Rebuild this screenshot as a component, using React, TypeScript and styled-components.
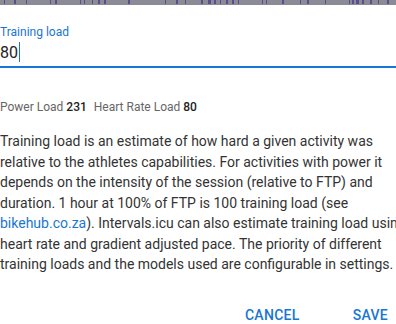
import React from "react";
import styled, { createGlobalStyle } from "styled-components";

const Global = createGlobalStyle`
  html, body { margin: 0; padding: 0; background: #fff; overflow: hidden; }
  body { font-family: Roboto, "Liberation Sans", Arial, sans-serif; }
`;

const Page = styled.div`
  width: 396px;
  height: 324px;
  overflow: hidden;
  display: flex;
  flex-direction: column;
`;

const Backdrop = styled.svg`
  display: block;
  width: 396px;
  height: 5px;
  flex: none;
`;

const Dialog = styled.div`
  width: 412px;
  display: flex;
  flex-direction: column;
`;

const Field = styled.div`
  margin-top: 20px;
  display: flex;
  flex-direction: column;
`;

const Label = styled.label`
  font-size: 12px;
  line-height: 14px;
  color: #1976d2;
`;

const InputRow = styled.div`
  display: flex;
  align-items: center;
  height: 24px;
  margin-top: 1px;
  font-size: 16px;
  color: #222;
  border-bottom: 2px solid #1976d2;
  padding-bottom: 2px;
`;

const Caret = styled.span`
  display: inline-block;
  width: 1px;
  height: 20px;
  background: #1976d2;
  margin-left: 1px;
`;

const Stats = styled.div`
  margin-top: 31px;
  font-size: 12px;
  line-height: 16px;
  color: #666;
  display: flex;
  gap: 7px;
`;

const Stat = styled.span`
  b {
    color: #222;
    font-weight: 500;
  }
`;

const Para = styled.p`
  margin: 16px 0 0;
  font-size: 14px;
  line-height: 20.5px;
  color: #333;
  width: 412px;
`;

const Link = styled.a`
  color: #1976d2;
  text-decoration: none;
`;

const Actions = styled.div`
  width: 396px;
  display: flex;
  justify-content: flex-end;
  gap: 37px;
  margin-top: 32px;
`;

const Button = styled.button`
  border: none;
  background: none;
  padding: 0 8px;
  font-family: inherit;
  font-size: 14px;
  font-weight: 500;
  letter-spacing: 0.3px;
  text-transform: uppercase;
  color: #1976d2;
  line-height: 16px;
`;

const ticks = [
  [4, 1], [14, 2], [26, 1], [50, 1], [55, 2], [80, 1], [84, 1], [92, 1], [98, 2], [104, 2],
  [128, 2], [165, 1], [176, 2], [185, 1], [201, 2], [208, 3], [214, 2], [220, 1], [226, 2],
  [232, 2], [238, 1], [262, 1], [266, 1], [282, 2], [300, 1], [307, 2], [325, 1], [349, 1],
  [352, 2], [356, 3], [362, 2], [370, 2], [378, 1], [387, 2],
];

export default function App() {
  return (
    <Page>
      <Global />
      <Backdrop viewBox="0 0 396 5">
        <rect x="0" y="0" width="396" height="5" fill="#8b8b95" />
        {ticks.map(([x, w], i) => (
          <rect key={i} x={x} y={0} width={w} height={4} fill="#5a4f8e" />
        ))}
      </Backdrop>
      <Dialog>
        <Field>
          <Label>Training load</Label>
          <InputRow>
            80<Caret />
          </InputRow>
        </Field>
        <Stats>
          <Stat>
            Power Load <b>231</b>
          </Stat>
          <Stat>
            Heart Rate Load <b>80</b>
          </Stat>
        </Stats>
        <Para>
          Training load is an estimate of how hard a given activity was relative to the athletes
          capabilities. For activities with power it depends on the intensity of the session
          (relative to FTP) and duration. 1 hour at 100% of FTP is 100 training load (see{" "}
          <Link href="#">bikehub.co.za</Link>). Intervals.icu can also estimate training load using
          heart rate and gradient adjusted pace. The priority of different training loads and the
          models used are configurable in settings.
        </Para>
        <Actions>
          <Button>Cancel</Button>
          <Button>Save</Button>
        </Actions>
      </Dialog>
    </Page>
  );
}
